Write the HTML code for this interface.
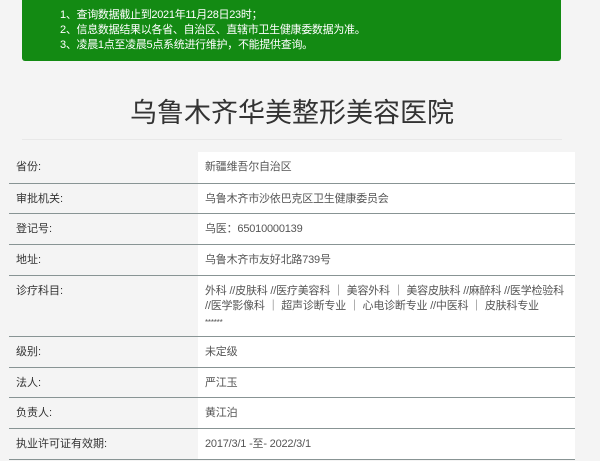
<!DOCTYPE html>
<html><head><meta charset="utf-8"><style>
body{margin:0;width:600px;height:461px;overflow:hidden;background:#f4f4f4;font-family:"Liberation Sans","Noto Sans CJK SC",sans-serif;}
.g{position:absolute;left:22px;top:0;width:539px;height:61px;background:#138a13;border-radius:0 0 3px 3px;color:#fff;font-size:11px;line-height:15px;padding-top:8px;box-sizing:border-box;letter-spacing:-0.3px}
.g div{padding-left:38px}
h1{position:absolute;left:0;width:584px;top:95px;margin:0;text-align:center;font-weight:normal;font-size:27px;color:#333;line-height:36px;}
.hr{position:absolute;left:22px;width:540px;top:139px;height:1px;background:#e8e8e8}
table{position:absolute;left:9px;top:152px;width:566px;border-collapse:collapse;font-size:11px;color:#444;table-layout:fixed}
td{border-bottom:1.5px solid #889494;vertical-align:top;padding:8px 0 0 0;line-height:15.5px;box-sizing:border-box}
td.l{width:189px;padding-left:7px;color:#333;}
td.v{background:#fff;padding-left:7px;padding-right:4px;color:#555;letter-spacing:-0.2px}
</style></head><body>
<div class="g"><div>1、查询数据截止到2021年11月28日23时；</div><div>2、信息数据结果以各省、自治区、直辖市卫生健康委数据为准。</div><div>3、凌晨1点至凌晨5点系统进行维护，不能提供查询。</div></div>
<h1>乌鲁木齐华美整形美容医院</h1>
<div class="hr"></div>
<table>
<tr style="height:31px"><td class="l">省份:</td><td class="v">新疆维吾尔自治区</td></tr>
<tr style="height:30px"><td class="l">审批机关:</td><td class="v">乌鲁木齐市沙依巴克区卫生健康委员会</td></tr>
<tr style="height:31px"><td class="l">登记号:</td><td class="v">乌医：65010000139</td></tr>
<tr style="height:31px"><td class="l">地址:</td><td class="v">乌鲁木齐市友好北路739号</td></tr>
<tr style="height:61px"><td class="l">诊疗科目:</td><td class="v">外科 //皮肤科 //医疗美容科 ｜ 美容外科 ｜ 美容皮肤科 //麻醉科 //医学检验科 //医学影像科 ｜ 超声诊断专业 ｜ 心电诊断专业 //中医科 ｜ 皮肤科专业<br><span style="font-size:8px;line-height:9px">******</span></td></tr>
<tr style="height:31px"><td class="l">级别:</td><td class="v">未定级</td></tr>
<tr style="height:30px"><td class="l">法人:</td><td class="v">严江玉</td></tr>
<tr style="height:31px"><td class="l">负责人:</td><td class="v">黄江泊</td></tr>
<tr style="height:31px"><td class="l">执业许可证有效期:</td><td class="v">2017/3/1 -至- 2022/3/1</td></tr>
</table>
</body></html>
